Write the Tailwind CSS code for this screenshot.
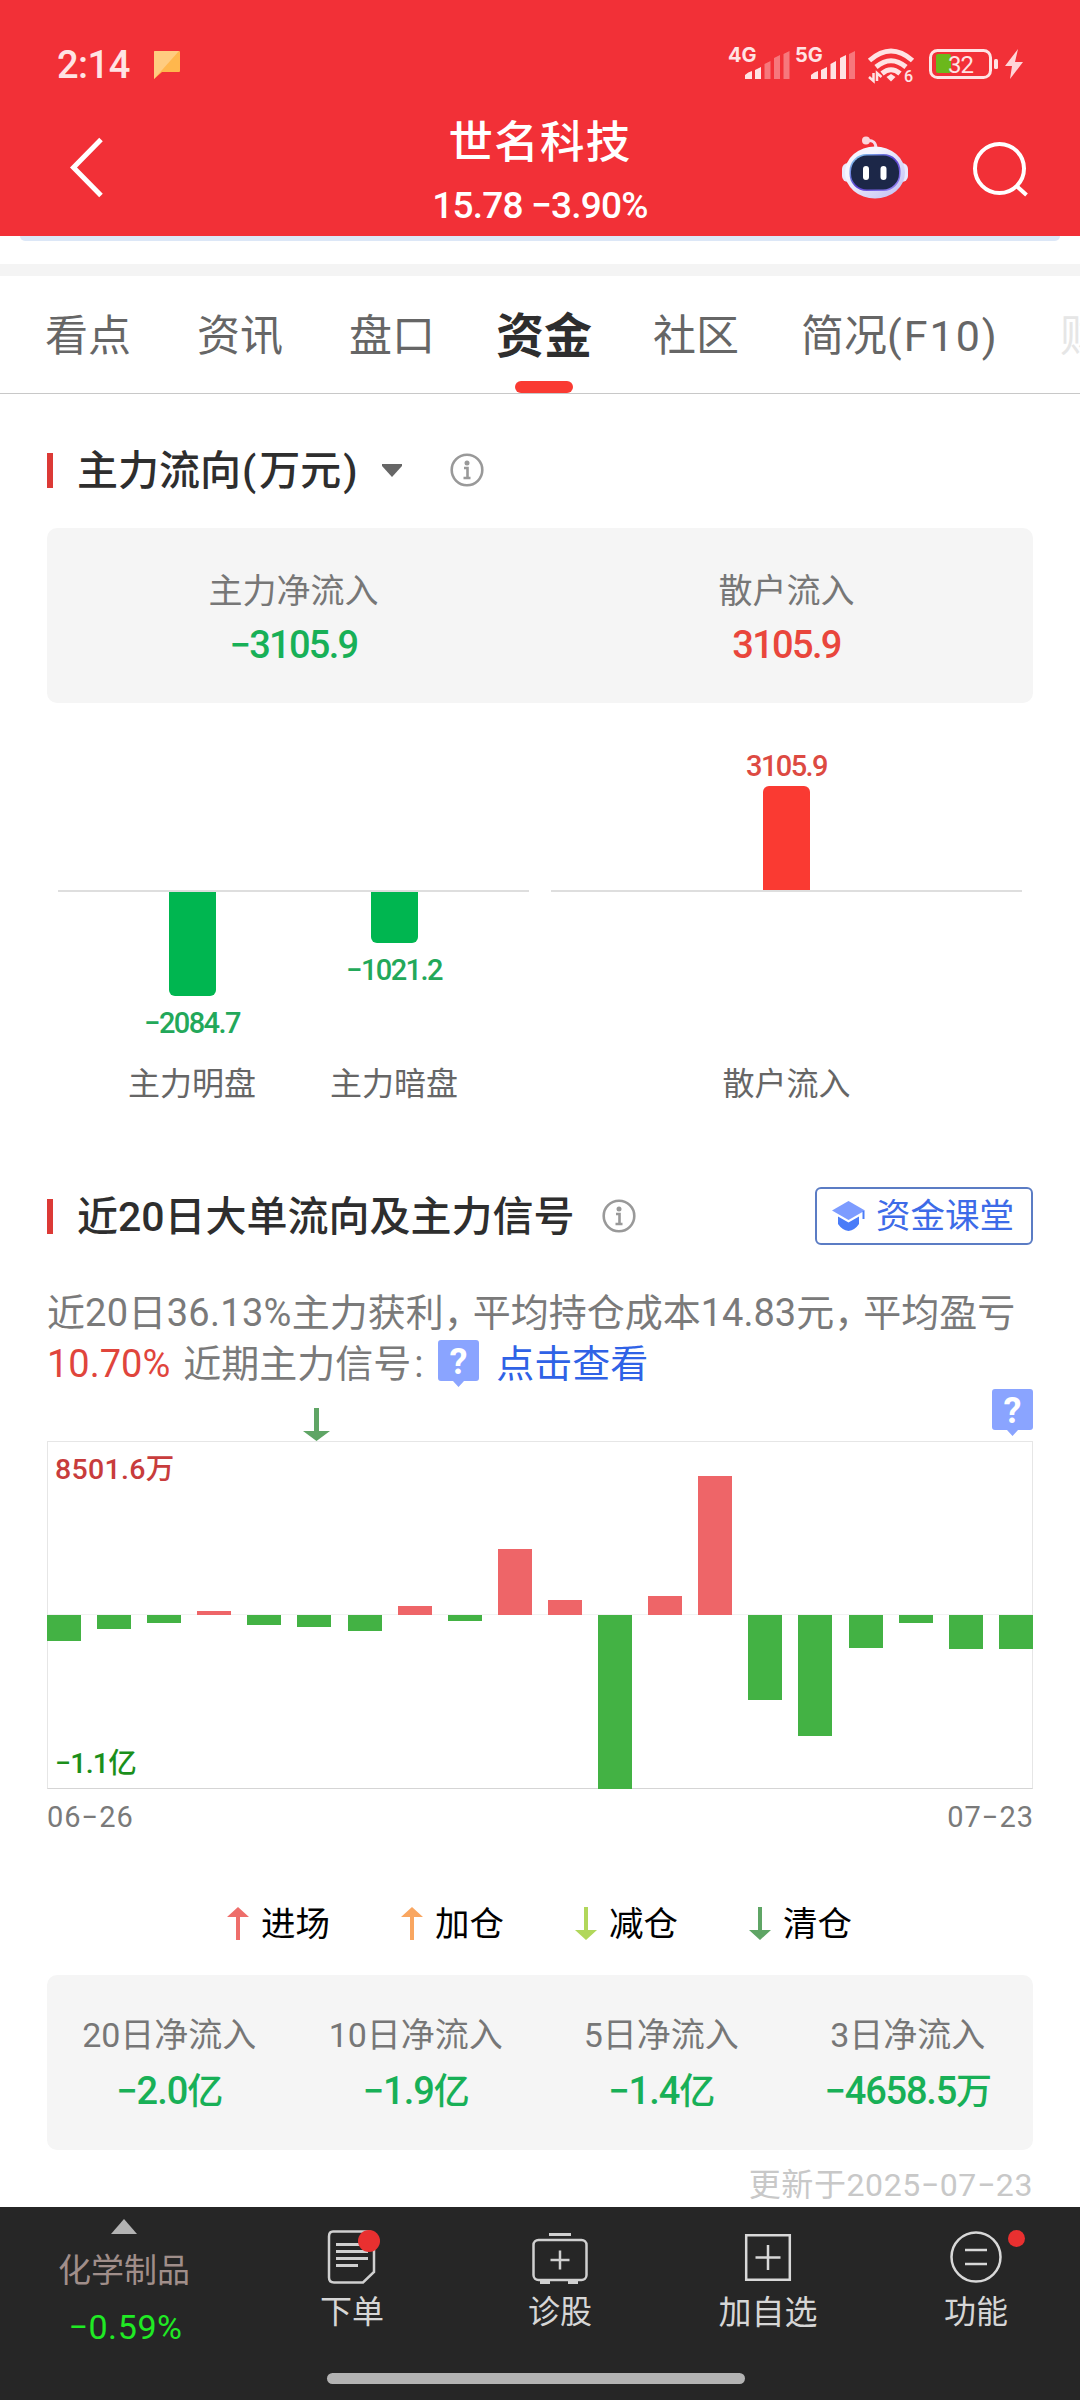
<!DOCTYPE html>
<html lang="zh-CN">
<head>
    <meta charset="UTF-8">
    <meta name="viewport" content="width=device-width, initial-scale=1.0">
    <title>世名科技 - 资金</title>
    <script src="https://cdn.jsdelivr.net/npm/@tailwindcss/browser@4"></script>
</head>
<body class="w-[1080px] h-[2400px] overflow-hidden bg-white font-[Roboto,'Noto_Sans_CJK_SC',sans-serif] leading-none whitespace-nowrap flex flex-col">

    <!-- Header -->
    <header class="h-[236px] shrink-0 bg-[#f23037] text-white">
        <!-- Status bar -->
        <div class="h-[106px] pt-[45px] pl-[57px] pr-[57px] flex justify-between items-start text-[#ffe3e4]">
            <div class="flex items-center h-10">
                <span class="text-[38px] font-medium tracking-[-0.5px]">2:14</span>
                <svg class="ml-[24px] w-[26px] h-7" viewBox="0 0 26 28"><path d="M0 1q0-1 1-1h24q1 0 1 1v19q0 1-1 1H8L0 28z" fill="#ffb74d"/><path d="M0 1q0-1 1-1h24L0 28z" fill="#ffcc80"/></svg>
            </div>
            <svg class="w-[295px] h-10 overflow-visible" viewBox="728 45 295 40">
                <g fill="#ffe3e4" font-family="Inter" font-weight="700" font-size="20">
                    <text x="728" y="62">4G</text>
                    <text x="795" y="62">5G</text>
                </g>
                <g fill="#ffe3e4">
                    <path d="M745 79v-4q3-3 7-4v8zM755 79v-9l6-3v12z"/>
                    <path d="M811 79v-4q3-3 7-4v8zM821 79v-9l6-3v12zM830.500 79V64l5.500-3v18zM840 79V58l6-3v24z"/>
                    <path opacity=".4" d="M764.500 79V64l6-3v18zM774 79V58l6-3v24zM783.500 79V54l6-3v28zM849 79V54l6-3v28z"/>
                </g>
                <g fill="none" stroke="#ffe3e4" stroke-width="5">
                    <path d="M869.500 60.500q21.500-19 43 0"/>
                    <path d="M876 67q15-12.500 30 0"/>
                    <path d="M882 73.500q9-7.500 18 0"/>
                </g>
                <path d="M886.500 77l4.500-3 4.500 3-4.500 4.500z" fill="#ffe3e4"/>
                <path d="M873.500 73v8l-4.500-4M877 81v-8l4.500 4" fill="none" stroke="#ffe3e4" stroke-width="2.500"/>
                <text x="904" y="82" fill="#ffe3e4" font-family="Roboto" font-weight="500" font-size="16">6</text>
                <rect x="930.500" y="50.500" width="60" height="27" rx="7" fill="none" stroke="#ffe3e4" stroke-width="3"/>
                <rect x="936" y="54" width="15" height="19" rx="2" fill="#6bb81c"/>
                <text x="948" y="73" fill="#ffe3e4" font-family="Roboto" font-size="24" textLength="26">32</text>
                <rect x="994" y="59" width="4" height="10" rx="1.500" fill="#ffe3e4"/>
                <path d="M1018 49l-13 17h7l-2 13 13-17h-8z" fill="#ffd5d7"/>
            </svg>
        </div>
        <!-- Title bar -->
        <div class="h-[130px] grid grid-cols-[300px_480px_300px]">
            <svg class="ml-[66px] mt-[28px] w-10 h-16" viewBox="0 0 40 64"><path d="M35 5.500L7.500 33.500 35 61.500" fill="none" stroke="#fff" stroke-width="5"/></svg>
            <div class="text-center font-medium">
                <h1 class="mt-[15px] text-[44.5px] tracking-[1.3px] leading-[44px]">世名科技</h1>
                <p class="mt-[22px] text-[37px] leading-[38px] tracking-[-0.8px]">15.78 −3.90%</p>
            </div>
            <div class="flex">
                <svg class="ml-[61px] mt-[29px] w-[68px] h-16" viewBox="0 0 68 64">
                    <defs>
                        <linearGradient id="head" x1="0" y1="0" x2="1" y2="1"><stop offset=".3" stop-color="#f6f5ff"/><stop offset="1" stop-color="#bdbcf0"/></linearGradient>
                        <linearGradient id="visor" x1="0" y1="0" x2="1" y2="1"><stop offset="0" stop-color="#8fe0f4"/><stop offset=".5" stop-color="#5a3fd0"/><stop offset="1" stop-color="#9a8cf5"/></linearGradient>
                    </defs>
                    <path d="M26 5.500q9-1 9 8" fill="none" stroke="#f6dcec" stroke-width="3"/>
                    <circle cx="25" cy="5.500" r="4" fill="#fbd5dc"/>
                    <rect x="1" y="28" width="66" height="19" rx="6" fill="#e9e8fc"/>
                    <ellipse cx="34" cy="37.500" rx="30" ry="26" fill="url(#head)"/>
                    <rect x="8.500" y="19" width="51" height="37" rx="17" fill="url(#visor)"/>
                    <rect x="10" y="20.500" width="48" height="34" rx="16" fill="#1c2748"/>
                    <rect x="22" y="31" width="6" height="14" rx="3" fill="#fff"/>
                    <rect x="39.500" y="31" width="6" height="14" rx="3" fill="#fff"/>
                </svg>
                <svg class="ml-[60px] mt-[33px] w-16 h-16" viewBox="0 0 64 64"><circle cx="30.500" cy="29.500" r="24.500" fill="none" stroke="#fff" stroke-width="4"/><path d="M47 46.500L57.500 56" stroke="#fff" stroke-width="4"/></svg>
            </div>
        </div>
    </header>

    <div class="h-7 shrink-0 px-5"><div class="h-[5px] bg-[#dce7f7] rounded-b-xl"></div></div>
    <div class="h-3 shrink-0 bg-[#f4f4f4]"></div>

    <!-- Tabs -->
    <nav class="h-[118px] shrink-0 border-b border-[#c8c8c8] flex text-[43px] text-[#666] overflow-hidden">
        <a class="shrink-0 w-[152px] pl-[45px] pt-[39px]">看点</a>
        <a class="shrink-0 w-[152px] pl-[45px] pt-[39px]">资讯</a>
        <a class="shrink-0 w-[152px] pl-[45px] pt-[39px]">盘口</a>
        <a class="shrink-0 w-[176px] flex flex-col items-center justify-between">
            <b class="pt-[37px] text-[48px] text-[#2e2e2e]">资金</b>
            <i class="w-[58px] h-3 rounded-full bg-[#fa3a32]"></i>
        </a>
        <a class="shrink-0 w-[148px] pl-[21px] pt-[39px]">社区</a>
        <a class="shrink-0 w-[280px] pl-[21px] pt-[39px]">简况<span class="tracking-[2px]">(F10)</span></a>
        <a class="shrink-0 pt-[39px] text-[#e6e6e6]">财</a>
    </nav>

    <main class="h-[1813px] shrink-0 px-[47px] flex flex-col overflow-hidden">
        <!-- Main flow -->
        <div class="mt-[54px] h-11 flex items-center">
            <i class="w-1.5 h-[35px] bg-[#dc3a36]"></i>
            <h2 class="ml-[24px] pt-[2px] w-[281px] text-[41px] font-medium text-[#2e2e2e]">主力流向<span class="ml-[1px] mr-[3px]">(</span>万元<span class="ml-[2px]">)</span></h2>
            <svg class="ml-[24px] w-5 h-[13px]" viewBox="0 0 20 13"><path d="M0 0h20v2l-10 11L0 2z" fill="#666"/></svg>
            <svg class="ml-[48px] w-[34px] h-[34px]" viewBox="0 0 34 34"><circle cx="17" cy="17" r="15.300" fill="none" stroke="#999" stroke-width="2.600"/><circle cx="17" cy="10" r="2.500" fill="#999"/><path d="M14 15h3.500v9.500M13.500 25h7" fill="none" stroke="#999" stroke-width="2.600"/></svg>
        </div>

        <div class="mt-[36px] h-[175px] rounded-[10px] bg-[#f5f5f5] grid grid-cols-2 text-center text-[34px] text-[#777]">
            <div class="pt-[46px]">
                <p>主力净流入</p>
                <p class="mt-[18px] text-[38px] font-medium tracking-[-1.7px] text-[#18b057]">−3105.9</p>
            </div>
            <div class="pt-[46px]">
                <p>散户流入</p>
                <p class="mt-[18px] text-[38px] font-medium tracking-[-1.7px] text-[#e9463c]">3105.9</p>
            </div>
        </div>

        <!-- Flow bars -->
        <div class="mt-[47px] h-[360px] px-[11px] flex gap-[22px] text-[29px] font-medium tracking-[-1.6px]">
            <div class="w-[471px]">
                <div class="h-[142px] border-b-2 border-[#dedede]"></div>
                <div class="flex pl-[33px] text-[#23a85a]">
                    <div class="w-[202px] h-[172px] flex flex-col items-center">
                        <i class="w-[47px] h-[104px] rounded-b-md bg-[#00b650]"></i>
                        <span class="mt-[13px]">−2084.7</span>
                    </div>
                    <div class="w-[202px] h-[172px] flex flex-col items-center">
                        <i class="w-[47px] h-[51px] rounded-b-md bg-[#00b650]"></i>
                        <span class="mt-[13px]">−1021.2</span>
                    </div>
                </div>
                <div class="flex pl-[33px] pt-[4px] text-[32px] font-normal tracking-normal text-center text-[#666]">
                    <span class="w-[202px]">主力明盘</span>
                    <span class="w-[202px]">主力暗盘</span>
                </div>
            </div>
            <div class="w-[471px]">
                <div class="h-[142px] border-b-2 border-[#dedede] flex flex-col items-center justify-end text-[#dd4a42]">
                    <span class="mb-[5px]">3105.9</span>
                    <i class="w-[47px] h-[104px] rounded-t-md bg-[#fa3a32]"></i>
                </div>
                <div class="pt-[176px] text-[32px] font-normal tracking-normal text-center text-[#666]">散户流入</div>
            </div>
        </div>

        <!-- 20 day signals -->
        <div class="mt-[76px] h-[60px] flex items-center">
            <i class="w-1.5 h-[35px] bg-[#dc3a36]"></i>
            <h2 class="ml-[24px] pt-[2px] w-[497px] text-[41px] font-medium text-[#2e2e2e]">近20日大单流向及主力信号</h2>
            <svg class="ml-[28px] w-[34px] h-[34px]" viewBox="0 0 34 34"><circle cx="17" cy="17" r="15.300" fill="none" stroke="#999" stroke-width="2.600"/><circle cx="17" cy="10" r="2.500" fill="#999"/><path d="M14 15h3.500v9.500M13.500 25h7" fill="none" stroke="#999" stroke-width="2.600"/></svg>
            <a class="ml-auto w-[218px] h-[58px] border-2 border-[#5b7cc4] rounded-md flex items-center pl-[15px] text-[34.5px] text-[#3d6be8]">
                <svg class="w-[33px] h-[30px] mr-[11px]" viewBox="0 0 33 30"><path d="M16.500 0L33 9.500 16.500 19 0 9.500z" fill="#7d9cff"/><path d="M6 15.500l10.500 6 10.500-6V23q-4 6-10.500 7Q10 29 6 23z" fill="#4a7cf8"/><path d="M31.500 10v8" stroke="#4a7cf8" stroke-width="2"/></svg>
                <span class="pt-[1px]">资金课堂</span>
            </a>
        </div>

        <div class="mt-[42px] text-[38px] leading-[51px] text-[#7a7a7a]">
            <p>近<span class="tracking-[0.3px]">20日36.13%</span>主力获利<span class="tracking-[-9px]">，</span>平均持仓成本14.83元<span class="tracking-[-9px]">，</span>平均盈亏</p>
            <p class="flex items-center">
                <span class="text-[#e0453c]">10.70%</span>
                <span class="ml-[13px] w-[243px]">近期主力信号<span class="ml-[3px]">:</span></span>
                <svg class="ml-[12px] -mt-[2px] w-[41px] h-[47px]" viewBox="0 0 41 47"><path d="M3 0h35q3 0 3 3v35q0 3-3 3H26l-5.500 6-5.500-6H3q-3 0-3-3V3q0-3 3-3z" fill="#8aa4ff"/><text x="20.500" y="34" text-anchor="middle" fill="#fff" font-family="Roboto" font-weight="700" font-size="36">?</text></svg>
                <span class="ml-[17px] text-[#2f62e6]">点击查看</span>
            </p>
        </div>

        <!-- Signal markers above the chart -->
        <div class="h-[51px] flex items-start justify-between">
            <svg class="ml-[256px] mt-[18px] w-[27px] h-[33px]" viewBox="0 0 27 33"><path d="M11 0h5v23h11L13.500 33 0 23h11z" fill="#5fa565"/></svg>
            <svg class="-mt-px w-[41px] h-[47px]" viewBox="0 0 41 47"><path d="M3 0h35q3 0 3 3v35q0 3-3 3H26l-5.500 6-5.500-6H3q-3 0-3-3V3q0-3 3-3z" fill="#8aa4ff"/><text x="20.500" y="34" text-anchor="middle" fill="#fff" font-family="Roboto" font-weight="700" font-size="36">?</text></svg>
        </div>

        <div class="relative h-[348px] shrink-0 border border-[#e6e6e6] border-b-[#d5d5d5]">
            <div class="absolute inset-x-0 top-[172px] h-px bg-[#f2f2f2]"></div>
            <div id="bars" class="absolute -inset-px flex justify-between"></div>
            <span class="absolute left-[7px] top-[14px] text-[28.5px] font-medium tracking-[0.3px] text-[#c83c3c]">8501.6万</span>
            <span class="absolute left-[7px] top-[308px] text-[28.5px] font-medium tracking-[-0.8px] text-[#1b8f1b]">−1.1亿</span>
        </div>
        <div class="mt-[14px] h-[29px] flex justify-between text-[29px] tracking-[1px] text-[#7a7a7a]"><span>06−26</span><span class="-mr-px">07−23</span></div>

        <!-- Legend -->
        <div class="mt-[73px] h-9 pl-[180px] flex items-center text-[34.5px] text-black">
            <span class="w-[174px] flex items-center gap-[12px]"><svg class="w-[22px] h-[33px]" viewBox="0 0 22 33"><path d="M9 33V10H0L11 0l11 10h-9v23z" fill="#ee6e6b"/></svg><span class="pt-[2px]">进场</span></span>
            <span class="w-[174px] flex items-center gap-[12px]"><svg class="w-[22px] h-[33px]" viewBox="0 0 22 33"><path d="M9 33V10H0L11 0l11 10h-9v23z" fill="#f9a660"/></svg><span class="pt-[2px]">加仓</span></span>
            <span class="w-[174px] flex items-center gap-[12px]"><svg class="w-[22px] h-[33px]" viewBox="0 0 22 33"><path d="M9 0v23H0l11 10 11-10h-9V0z" fill="#b1d75b"/></svg><span class="pt-[2px]">减仓</span></span>
            <span class="w-[174px] flex items-center gap-[12px]"><svg class="w-[22px] h-[33px]" viewBox="0 0 22 33"><path d="M9 0v23H0l11 10 11-10h-9V0z" fill="#5fa565"/></svg><span class="pt-[2px]">清仓</span></span>
        </div>

        <!-- Net inflow summary -->
        <div class="mt-[34px] h-[175px] shrink-0 rounded-[10px] bg-[#f5f5f5] grid grid-cols-4 text-center text-[34px] text-[#777]">
            <div class="pt-[43px] -ml-[2px]">
                <p>20日净流入</p>
                <p class="mt-[20px] text-[38px] font-medium tracking-[-1px] text-[#18b057]">−2.0<span class="text-[36px]">亿</span></p>
            </div>
            <div class="pt-[43px] -ml-[2px]">
                <p>10日净流入</p>
                <p class="mt-[20px] text-[38px] font-medium tracking-[-1px] text-[#18b057]">−1.9<span class="text-[36px]">亿</span></p>
            </div>
            <div class="pt-[43px] -ml-[4px]">
                <p>5日净流入</p>
                <p class="mt-[20px] text-[38px] font-medium tracking-[-1px] text-[#18b057]">−1.4<span class="text-[36px]">亿</span></p>
            </div>
            <div class="pt-[43px] -ml-[4px]">
                <p>3日净流入</p>
                <p class="mt-[20px] text-[38px] font-medium tracking-[-1.2px] text-[#18b057]">−4658.5<span class="text-[36px]">万</span></p>
            </div>
        </div>
        <p class="mt-[19px] text-right text-[32px] tracking-[0.6px] text-[#c8c8c8]">更新于2025−07−23</p>
    </main>

    <!-- Bottom bar -->
    <footer class="h-[193px] shrink-0 bg-[#262626] flex flex-col items-center text-[32px] text-[#d6d6d6]">
        <div class="w-full h-[166px] grid grid-cols-[248px_208px_208px_208px_208px]">
            <div class="flex flex-col items-center pt-[12px]">
                <svg class="w-[26px] h-[15px]" viewBox="0 0 26 15"><path d="M13 0l13 15H0z" fill="#b3b3b3"/></svg>
                <span class="mt-[20px] text-[33px] text-[#a08e8a]">化学制品</span>
                <span class="mt-[23px] pl-[3px] text-[34px] tracking-[0.6px] text-[#20ea24]">−0.59%</span>
            </div>
            <div class="flex flex-col items-center pt-[20px]">
                <svg class="w-[60px] h-[60px]" viewBox="0 0 60 60" fill="none" stroke="#d0d0d0" stroke-width="2.500"><path d="M11 4.500h35q6 0 6 5V45L41 55.500H12q-5 0-5-5V9.500q0-5 4-5z"/><path d="M14 17.500h26M14 24.500h32M14 31.500h32M14 38.500h22" stroke-width="2.800"/><circle cx="47" cy="14" r="11" fill="#e93030" stroke="none"/></svg>
                <span class="mt-[9px]">下单</span>
            </div>
            <div class="flex flex-col items-center pt-[20px]">
                <svg class="w-[60px] h-[60px]" viewBox="0 0 60 60" fill="none" stroke="#d0d0d0" stroke-width="2.500"><path d="M19 7.500h22" stroke-width="3"/><rect x="3.500" y="13" width="53" height="40" rx="5"/><path d="M30 23.500v19M20.500 33h19"/><path d="M10 55h10M38 55h10" stroke-width="4"/></svg>
                <span class="mt-[9px]">诊股</span>
            </div>
            <div class="flex flex-col items-center pt-[20px]">
                <svg class="w-[60px] h-[60px]" viewBox="0 0 60 60" fill="none" stroke="#d8d8d8" stroke-width="2.500"><path d="M8.200 8.200h43.600v44.600H8.200zM30 18v25M17.500 30.500h25"/></svg>
                <span class="mt-[9px] text-[33px]">加自选</span>
            </div>
            <div class="relative flex flex-col items-center pt-[20px]">
                <svg class="w-[60px] h-[60px]" viewBox="0 0 60 60" fill="none" stroke="#d8d8d8" stroke-width="2.500"><circle cx="30" cy="30" r="24.500"/><path d="M19 23h22M19 37h22"/></svg>
                <i class="absolute left-[136px] top-[23px] w-[17px] h-[17px] rounded-full bg-[#e93030]"></i>
                <span class="mt-[9px]">功能</span>
            </div>
        </div>
        <i class="w-[418px] h-[11px] rounded-full bg-[#b3b3b3] -ml-[8px]"></i>
    </footer>

    <script>
        // Daily net flow, in pixels above (+) or below (-) the zero line
        const flows = [-26, -14, -8, 4, -10, -12, -16, 9, -6, 66, 15, -174, 19, 139, -85, -121, -33, -8, -34, -34];
        document.getElementById('bars').innerHTML = flows.map(v => `
            <div class="w-[34px]" style="padding-top:${v > 0 ? 174 - v : 174}px">
                <div class="${v > 0 ? 'bg-[#ee6568]' : 'bg-[#43b244]'}" style="height:${Math.abs(v)}px"></div>
            </div>`).join('');
    </script>
</body>
</html>
